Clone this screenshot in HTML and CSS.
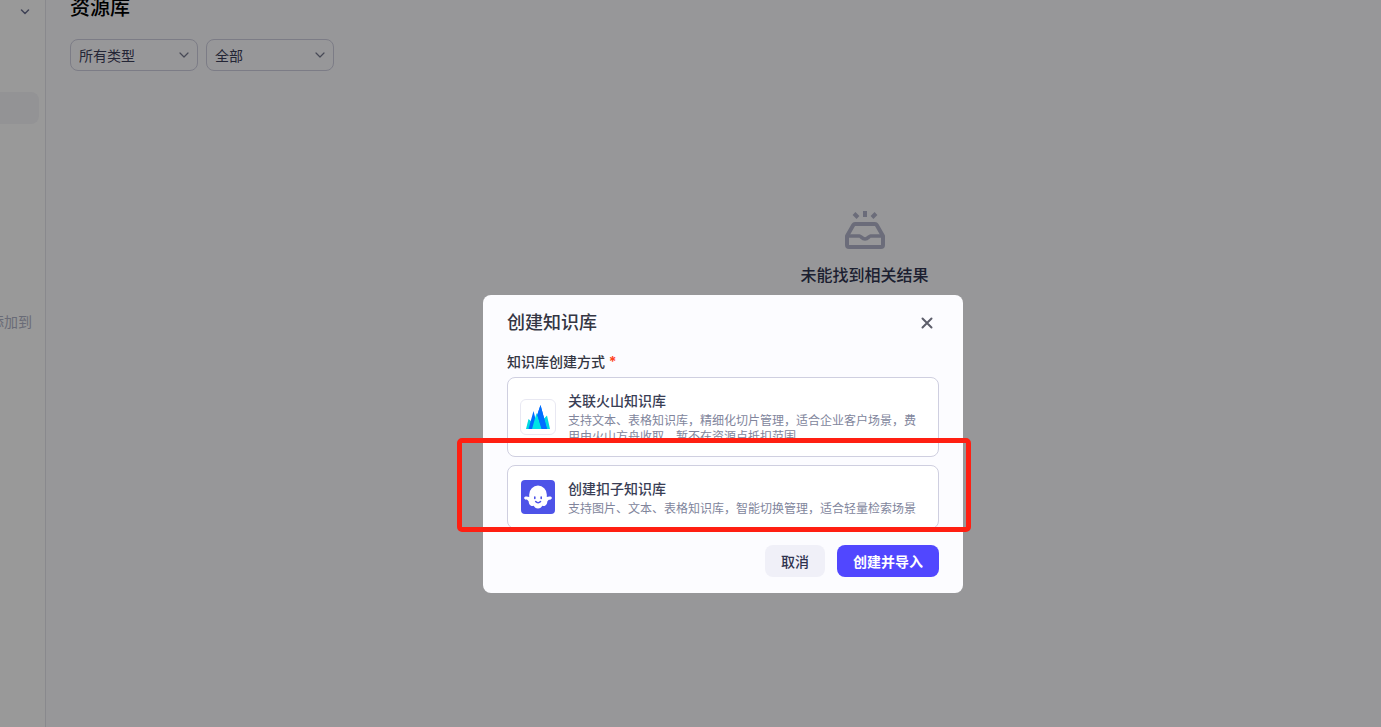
FILE: index.html
```html
<!DOCTYPE html>
<html lang="zh-CN">
<head>
<meta charset="utf-8">
<title>资源库</title>
<link rel="stylesheet" href="styles.css">
</head>
<body>
<div class="app">
  <aside class="sidebar">
    <button class="sidebar-toggle" aria-label="展开">
      <svg width="10" height="6" viewBox="0 0 10 6" fill="none" stroke="currentColor" stroke-width="1.5" stroke-linecap="round" stroke-linejoin="round"><path d="M1.5 1 5 4.500 8.500 1"/></svg>
    </button>
    <div class="sidebar-active"></div>
    <p class="sidebar-hint">添加到</p>
  </aside>
  <main class="main">
    <h1 class="page-title">资源库</h1>
    <div class="filters">
      <div class="filter">
        <select class="filter-select" aria-label="类型"><option>所有类型</option></select>
        <svg class="filter-arrow" width="10" height="8" viewBox="0 0 10 8" fill="none" stroke="currentColor" stroke-width="1.2" stroke-linecap="round" stroke-linejoin="round"><path d="M1 2 5 6l4-4"/></svg>
      </div>
      <div class="filter">
        <select class="filter-select" aria-label="范围"><option>全部</option></select>
        <svg class="filter-arrow" width="10" height="8" viewBox="0 0 10 8" fill="none" stroke="currentColor" stroke-width="1.2" stroke-linecap="round" stroke-linejoin="round"><path d="M1 2 5 6l4-4"/></svg>
      </div>
    </div>
    <section class="empty">
      <svg class="empty-icon" width="40" height="40" viewBox="0 0 40 40" fill="none" stroke="currentColor" stroke-width="4" stroke-linejoin="round"><path d="M2 25 8.300 14a2 2 0 0 1 1.700-1h20a2 2 0 0 1 1.700 1L38 25v9a2 2 0 0 1-2 2H4a2 2 0 0 1-2-2z"/><path d="M2 25h12.500c1.500 0 2.500 3 5.500 3s4-3 5.500-3H38" stroke-width="3.500"/><path d="M20 0v6M9 2.500l4 4M31 2.500l-4 4"/></svg>
      <p class="empty-text">未能找到相关结果</p>
    </section>
  </main>
</div>

<div class="overlay">
  <div class="modal" role="dialog" aria-modal="true" aria-labelledby="modal-title">
    <header class="modal-header">
      <h2 class="modal-title" id="modal-title">创建知识库</h2>
      <button class="modal-close" aria-label="关闭">
        <svg width="12" height="12" viewBox="0 0 12 12" fill="none" stroke="currentColor" stroke-width="2" stroke-linecap="round"><path d="m1.500 1.500 9 9M10.500 1.500l-9 9"/></svg>
      </button>
    </header>
    <fieldset class="methods">
      <legend class="methods-label">知识库创建方式 <span class="required">*</span></legend>
      <label class="card">
        <input class="card-radio" type="radio" name="method">
        <svg class="card-icon" width="36" height="36" viewBox="0 0 36 36"><rect x=".5" y=".5" width="35" height="35" rx="5.500" fill="#fff" stroke="#e8e8f2"/><path fill="#00d9e0" d="M6 30 8.500 20 12 23l-2 7zM30 30l-3-13.500L23.500 20l1.500 10z"/><path fill="#006eff" d="M8.500 30 13.500 12 18 30zM14.500 24l6-18 6.500 24h-8z"/><path fill="#00e5e5" d="M12 30l4.500-16L22 30z"/><path fill="#006eff" d="M17.300 16 20.500 6 27 30h-5.500z"/></svg>
        <span class="card-body">
          <span class="card-title">关联火山知识库</span>
          <span class="card-desc">支持文本、表格知识库，精细化切片管理，适合企业客户场景，费用由火山方舟收取，暂不在资源点抵扣范围</span>
        </span>
      </label>
      <label class="card">
        <input class="card-radio" type="radio" name="method">
        <svg class="card-icon" width="36" height="36" viewBox="0 0 36 36"><rect x="1" y="1" width="34" height="34" rx="4" fill="#4d53e8"/><path fill="#fff" d="M9.200 15.500a8.800 9 0 0 1 17.600 0v2.500c1-.2 1.500-.4 2.500-.4h1.200c1.800.2 1.800 2.500.2 3-.8.300-1.700 0-2.200.5-.5.600-.8 1-1.200 1.500 0 1.800-.8 3.600-2.300 4.200-1 .4-1.500.2-2.700-.1-.8 1.500-2.200 2.700-4.300 2.700s-3.500-1.200-4.300-2.700c-1.200.3-1.700.5-2.700.1-1.500-.6-2.300-2.400-2.300-4.200-.4-.5-.7-.9-1.200-1.500-.5-.5-1.400-.2-2.200-.5-1.600-.5-1.600-2.800.2-3h1.200c1 0 1.500.2 2.500.4z"/><path fill="none" stroke="#4d53e8" stroke-width="1.600" stroke-linecap="round" d="M14.800 18v1.500M21.200 18v1.500M15.700 22.500c1.300 1.600 3.500 1.600 4.800 0"/></svg>
        <span class="card-body">
          <span class="card-title">创建扣子知识库</span>
          <span class="card-desc">支持图片、文本、表格知识库，智能切换管理，适合轻量检索场景</span>
        </span>
      </label>
    </fieldset>
    <footer class="modal-footer">
      <button class="btn btn-cancel">取消</button>
      <button class="btn btn-primary">创建并导入</button>
    </footer>
    <div class="highlight"></div>
  </div>
</div>
</body>
</html>
```
FILE: styles.css
```css
* {
  box-sizing: border-box;
}

body {
  margin: 0;
  font-family: Inter, "Noto Sans CJK SC", sans-serif;
  font-size: 14px;
  overflow: hidden;
}

h1, h2, p {
  margin: 0;
}

button, select {
  font: inherit;
  cursor: pointer;
}

.app {
  display: flex;
  min-height: 100vh;
  background: #fcfcff;
}

.sidebar {
  display: flex;
  flex-direction: column;
  flex: 0 0 46px;
  overflow: hidden;
  background: #fff;
  border-right: 1px solid #e4e4ec;
}

.sidebar-toggle {
  display: flex;
  align-self: flex-end;
  margin: 4px 12px 0 0;
  padding: 5px 3px;
  border: 0;
  background: none;
  color: #6b7090;
}

.sidebar-active {
  height: 32px;
  margin: 72px 6px 0 0;
  border-radius: 0 8px 8px 0;
  background: #f5f5f9;
}

.sidebar-hint {
  display: flex;
  justify-content: flex-end;
  margin: 188px 13px 0 0;
  line-height: 20px;
  white-space: nowrap;
  color: #b0b3c6;
}

.main {
  flex: 1;
  padding: 0 24px;
}

.page-title {
  font-size: 20px;
  font-weight: 500;
  line-height: 16px;
  color: #000;
}

.filters {
  display: flex;
  gap: 8px;
  margin-top: 23px;
}

.filter {
  position: relative;
  width: 128px;
}

.filter-select {
  display: block;
  width: 100%;
  height: 32px;
  padding: 0 28px 0 8px;
  appearance: none;
  border: 1px solid #cfcfe0;
  border-radius: 8px;
  background: transparent;
  color: #3c405a;
}

.filter-arrow {
  position: absolute;
  top: 12px;
  right: 9px;
  color: #777b90;
  pointer-events: none;
}

.empty {
  display: flex;
  flex-direction: column;
  align-items: center;
  gap: 12px;
  margin-top: 140px;
  padding-left: 302px;
}

.empty-icon {
  color: #b3b5cb;
}

.empty-text {
  font-size: 16px;
  font-weight: 500;
  line-height: 24px;
  color: #303450;
}

.overlay {
  position: fixed;
  inset: 0;
  display: flex;
  align-items: center;
  justify-content: center;
  padding: 161px 0 0 65px;
  background: rgba(0, 0, 0, 0.4);
}

.modal {
  position: relative;
  width: 480px;
  padding: 16px 24px;
  border-radius: 8px;
  background: #fcfcff;
}

.modal-header {
  display: flex;
  align-items: center;
  justify-content: space-between;
  margin-bottom: 16px;
}

.modal-title {
  font-size: 18px;
  font-weight: 500;
  line-height: 24px;
  color: #343643;
}

.modal-close {
  display: grid;
  place-items: center;
  width: 24px;
  height: 24px;
  padding: 0;
  border: 0;
  background: none;
  color: #5d5e6b;
}

.methods {
  display: flex;
  flex-direction: column;
  gap: 8px;
  min-width: 0;
  margin: 0;
  padding: 0;
  border: 0;
}

.methods-label {
  margin-bottom: 4px;
  padding: 0;
  font-weight: 500;
  line-height: 22px;
  color: #343643;
}

.required {
  font-weight: 700;
  color: #ff441e;
}

.card {
  display: flex;
  align-items: center;
  gap: 12px;
  padding: 11px 12px;
  border: 1px solid #cfcfe0;
  border-radius: 8px;
  background: #fff;
  cursor: pointer;
}

.card-radio {
  position: absolute;
  opacity: 0;
  pointer-events: none;
}

.card-icon {
  flex: none;
}

.card-body {
  display: flex;
  flex-direction: column;
}

.card-title {
  font-weight: 500;
  line-height: 24px;
  color: #3a3e55;
}

.card-desc {
  font-size: 12px;
  line-height: 16px;
  color: #81859c;
}

.modal-footer {
  display: flex;
  justify-content: flex-end;
  gap: 12px;
  margin-top: 16px;
}

.btn {
  height: 32px;
  padding: 0 16px;
  border: 0;
  border-radius: 8px;
}

.btn-cancel {
  background: #f0f0f8;
  font-weight: 500;
  color: #303450;
}

.btn-primary {
  background: #5147ff;
  font-weight: 700;
  color: #fff;
}

.highlight {
  position: absolute;
  top: 143px;
  left: -26px;
  right: -8px;
  height: 94px;
  border: 5px solid #ff1f12;
  border-radius: 5px;
  pointer-events: none;
}
```
